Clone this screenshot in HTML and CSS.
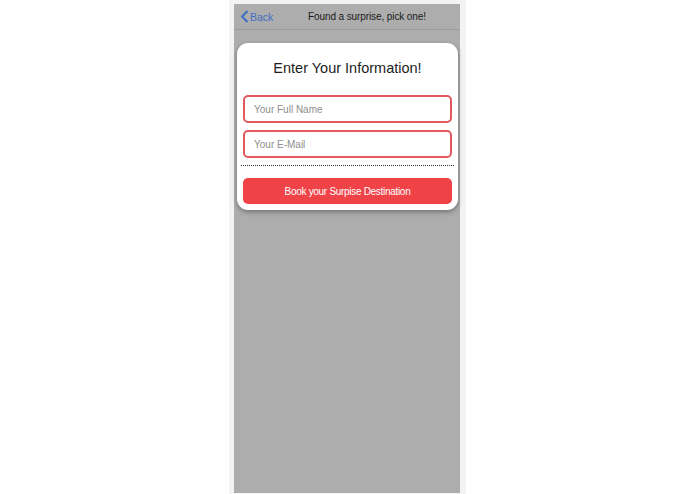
FILE: index.html
```html
<!DOCTYPE html>
<html>
<head>
<meta charset="utf-8">
<link rel="stylesheet" href="styles.css">
</head>
<body>
<div class="frame">
  <div class="screen">
    <div class="header">
      <div class="back">
        <svg class="chev" width="9" height="13" viewBox="0 0 9 13"><path d="M7.5 1 L2 6.5 L7.5 12" fill="none" stroke="#3d6fc2" stroke-width="2"/></svg>
        <span>Back</span>
      </div>
      <div class="title">Found a surprise, pick one!</div>
    </div>
    <div class="card">
      <h1 class="card-title">Enter Your Information!</h1>
      <div class="field">Your Full Name</div>
      <div class="field">Your E-Mail</div>
      <div class="divider"></div>
      <div class="btn">Book your Surpise Destination</div>
    </div>
  </div>
</div>
</body>
</html>
```
FILE: styles.css
```css
html, body { margin: 0; padding: 0; background: #fff; }
body { font-family: "Liberation Sans", Arial, sans-serif; }
.frame {
  width: 237px;
  height: 494px;
  margin: 0 auto;
  background: #f3f3f3;
  padding: 4px 6px 0 5px;
  box-sizing: border-box;
}
.screen {
  background: #adadad;
  height: 489px;
  display: flex;
  flex-direction: column;
}
.header {
  height: 26px;
  border-bottom: 1px solid #9c9c9c;
  display: flex;
  align-items: center;
  padding-left: 6px;
  box-sizing: border-box;
}
.back {
  display: flex;
  align-items: center;
  gap: 1px;
  color: #3d6fc2;
  font-size: 10.5px;
  width: 68px;
}
.chev { display: block; }
.title { font-size: 10px; color: #1a1a1a; letter-spacing: -0.1px; }
.card {
  margin: 13px 2px 0 3px;
  background: #fff;
  border-radius: 11px;
  padding: 15px 6px 6px 6px;
  box-shadow: 0 2px 5px rgba(0,0,0,0.35);
}
.card-title {
  margin: 0 0 17px 0;
  text-align: center;
  font-weight: normal;
  font-size: 14.5px;
  color: #1e1e1e;
  line-height: 20px;
}
.field {
  height: 28px;
  border: 2px solid #e05a5e;
  border-radius: 5px;
  box-sizing: border-box;
  font-size: 10px;
  color: #8e8e8e;
  padding-left: 9px;
  display: flex;
  align-items: center;
  margin-bottom: 7px;
}
.divider {
  border-top: 1px dotted #333;
  margin: 2px -2px 12px -2px;
}
.btn {
  height: 26px;
  background: #ef4347;
  border-radius: 5px;
  color: #fff;
  font-size: 10px;
  letter-spacing: -0.3px;
  display: flex;
  align-items: center;
  justify-content: center;
}
```
